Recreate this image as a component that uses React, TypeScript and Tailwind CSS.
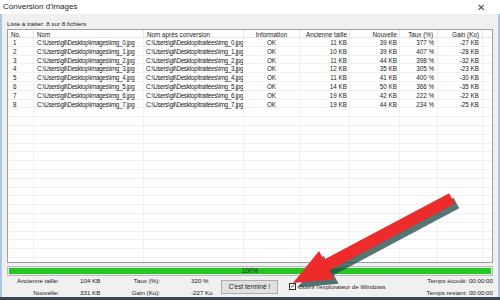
import React from "react";

const rows = [
  ["1", "0", "11 KB", "39 KB", "377 %", "-27 KB"],
  ["2", "1", "10 KB", "39 KB", "407 %", "-28 KB"],
  ["3", "2", "11 KB", "44 KB", "398 %", "-32 KB"],
  ["4", "3", "12 KB", "35 KB", "305 %", "-23 KB"],
  ["5", "4", "11 KB", "41 KB", "400 %", "-30 KB"],
  ["6", "5", "14 KB", "50 KB", "366 %", "-35 KB"],
  ["7", "6", "19 KB", "42 KB", "222 %", "-22 KB"],
  ["8", "7", "19 KB", "44 KB", "234 %", "-25 KB"],
];

const cols = "grid grid-cols-[26px_110px_100px_56px_50px_50px_38px_45px_1fr]";

function Arrow() {
  // big red pointer drawn over the dialog
  const shape = "0,0 -38,-16 -38,-6 -180,-6 -180,6 -38,6 -38,16";
  return (
    <svg className="absolute left-0 top-0 pointer-events-none" width="500" height="300">
      <g transform="translate(295,286) rotate(152)">
        <polygon points={shape} fill="#1d4a44" opacity="0.75" transform="translate(-1.5,-2.5)" />
      </g>
      <g transform="translate(293,283) rotate(152)">
        <polygon points={shape} fill="#ee2b2b" />
      </g>
    </svg>
  );
}

export default function App() {
  const empty = Array.from({ length: 20 });
  return (
    <div className="relative w-[500px] h-[300px] overflow-hidden bg-[#3b4654] font-['Liberation_Sans',Arial,sans-serif] text-[#1a1a1a]">
      <div className="flex flex-col h-[297px] bg-[#f0f0f0] border-x-2 border-[#a8c8e6]">
        {/* title bar */}
        <div className="h-[14px] shrink-0 bg-white flex items-center justify-between pl-[1px] pr-[15px] text-[8px] -mx-[2px]">
          <span className="pl-[2px]">Conversion d'images</span>
          <span className="text-[10px] font-light text-[#444]">✕</span>
        </div>

        <div className="flex-1 flex flex-col px-[5px]">
          <div className="h-[15px] flex items-center text-[6.2px] pt-[4px]">Liste à traiter: 8 sur 8 fichiers</div>

          {/* list */}
          <div className="h-[234px] bg-white border border-[#9aa0a8] overflow-hidden text-[6.3px]">
            <div className={`${cols} h-[8px] items-center border-b border-[#e5e5e5]`}>
              <div className="pl-[3px] border-r border-[#e5e5e5] h-full flex items-center">No.</div>
              <div className="pl-[3px] border-r border-[#e5e5e5] h-full flex items-center">Nom</div>
              <div className="pl-[3px] border-r border-[#e5e5e5] h-full flex items-center">Nom après conversion</div>
              <div className="border-r border-[#e5e5e5] h-full flex items-center justify-center">Information</div>
              <div className="pr-[2px] border-r border-[#e5e5e5] h-full flex items-center justify-end">Ancienne taille</div>
              <div className="pr-[2px] border-r border-[#e5e5e5] h-full flex items-center justify-end">Nouvelle</div>
              <div className="pr-[4px] border-r border-[#e5e5e5] h-full flex items-center justify-end">Taux (%)</div>
              <div className="pr-[3px] border-r border-[#e5e5e5] h-full flex items-center justify-end">Gain (Ko)</div>
              <div />
            </div>
            {rows.map((r) => (
              <div key={r[0]} className={`${cols} h-[8.8px] items-center border-b border-[#f0f0f0]`}>
                <div className="pl-[5px] border-r border-[#f0f0f0] h-full flex items-center">{r[0]}</div>
                <div className="pl-[3px] border-r border-[#f0f0f0] h-full flex items-center whitespace-nowrap overflow-hidden tracking-[-0.3px]">{`C:\\Users\\gil\\Desktop\\images\\img_${r[1]}.jpg`}</div>
                <div className="pl-[2px] border-r border-[#f0f0f0] h-full flex items-center whitespace-nowrap overflow-hidden tracking-[-0.3px]">{`C:\\Users\\gil\\Desktop\\traitées\\img_${r[1]}.jpg`}</div>
                <div className="border-r border-[#f0f0f0] h-full flex items-center justify-center">OK</div>
                <div className="pr-[2px] border-r border-[#f0f0f0] h-full flex items-center justify-end">{r[2]}</div>
                <div className="pr-[2px] border-r border-[#f0f0f0] h-full flex items-center justify-end">{r[3]}</div>
                <div className="pr-[3px] border-r border-[#f0f0f0] h-full flex items-center justify-end">{r[4]}</div>
                <div className="pr-[3px] border-r border-[#f0f0f0] h-full flex items-center justify-end">{r[5]}</div>
                <div />
              </div>
            ))}
            {empty.map((_, i) => (
              <div key={i} className={`${cols} h-[8.8px] border-b border-[#f0f0f0]`}>
                <div className="border-r border-[#f0f0f0]" />
                <div className="border-r border-[#f0f0f0]" />
                <div className="border-r border-[#f0f0f0]" />
                <div className="border-r border-[#f0f0f0]" />
                <div className="border-r border-[#f0f0f0]" />
                <div className="border-r border-[#f0f0f0]" />
                <div className="border-r border-[#f0f0f0]" />
                <div className="border-r border-[#f0f0f0]" />
                <div />
              </div>
            ))}
          </div>

          {/* progress */}
          <div className="mt-[3px] h-[10px] border border-[#bcbcbc] bg-[#e6e6e6] p-[1px]">
            <div className="h-full w-full bg-[#26c526] flex items-center justify-center text-[6.3px] text-[#222]">100%</div>
          </div>

          {/* footer */}
          <div className="flex items-center h-[21px] text-[6.2px]">
            <div className="flex flex-col gap-[2px] w-[52px] items-end">
              <span>Ancienne taille:</span>
              <span>Nouvelle:</span>
            </div>
            <div className="flex flex-col gap-[2px] ml-[21px] w-[40px]">
              <span>104 KB</span>
              <span>331 KB</span>
            </div>
            <div className="flex flex-col gap-[2px] w-[40px] items-end">
              <span>Taux (%):</span>
              <span>Gain (Ko):</span>
            </div>
            <div className="flex flex-col gap-[2px] ml-[31px] w-[30px]">
              <span>320 %</span>
              <span>-227 Ko</span>
            </div>
            <button className="w-[57px] h-[14px] border border-[#adadad] bg-[#e1e1e1] text-[6.5px] flex items-center justify-center">
              C'est terminé !
            </button>
            <div className="flex items-center ml-[11px] gap-[2px]">
              <span className="w-[7px] h-[7px] border border-[#333] bg-white flex items-center justify-center">
                <svg width="6" height="6" viewBox="0 0 6 6">
                  <path d="M0.8 3.1 L2.4 4.6 L5.2 1.2" stroke="#222" strokeWidth="0.9" fill="none" />
                </svg>
              </span>
              <span>Ouvrir l'explorateur de Windows</span>
            </div>
            <div className="ml-auto flex flex-col gap-[2px] items-end">
              <span>Temps écoulé: 00:00:00</span>
              <span>Temps restant: 00:00:00</span>
            </div>
          </div>
        </div>
      </div>
      <Arrow />
    </div>
  );
}
